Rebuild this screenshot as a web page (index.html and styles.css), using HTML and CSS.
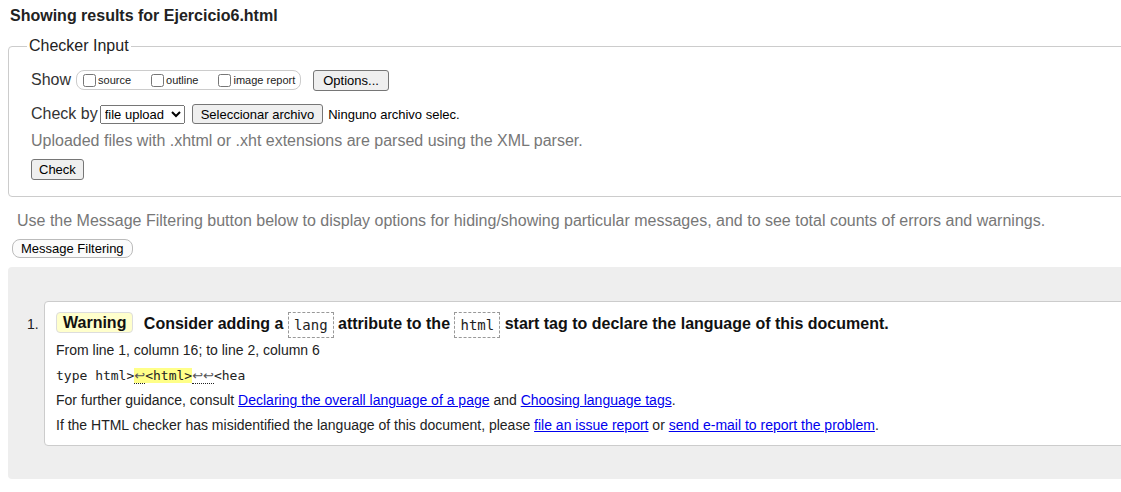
FILE: index.html
```html
<!DOCTYPE html>
<html lang="es">
<head>
<meta charset="utf-8">
<title>Showing results for Ejercicio6.html - Nu Html Checker</title>
<link rel="stylesheet" href="styles.css">
</head>
<body>
<h2 class="title">Showing results for Ejercicio6.html</h2>
<form class="checker">
  <fieldset class="input-box">
    <legend class="legend">Checker Input</legend>
    <div class="row show-row">
      <span class="label">Show</span>
      <span class="opts">
        <label class="opt"><input type="checkbox"><span>source</span></label>
        <label class="opt"><input type="checkbox"><span>outline</span></label>
        <label class="opt"><input type="checkbox"><span>image report</span></label>
      </span>
      <button type="button" class="btn btn-options">Options...</button>
    </div>
    <div class="row checkby-row">
      <span class="label label-check">Check by</span>
      <select class="select"><option>file upload</option></select>
      <button type="button" class="btn btn-file">Seleccionar archivo</button>
      <span class="file-name">Ninguno archivo selec.</span>
    </div>
    <p class="hint">Uploaded files with .xhtml or .xht extensions are parsed using the XML parser.</p>
    <div class="row check-row"><button type="button" class="btn btn-check">Check</button></div>
  </fieldset>
</form>
<p class="filter-hint">Use the Message Filtering button below to display options for hiding/showing particular messages, and to see total counts of errors and warnings.</p>
<button type="button" class="btn-filter">Message Filtering</button>
<div class="results">
  <ol class="messages">
    <li class="message">
      <span class="num">1.</span>
      <div class="card">
        <p class="msg-title"><strong class="badge">Warning</strong> Consider adding a <code class="code">lang</code> attribute to the <code class="code">html</code> start tag to declare the language of this document.</p>
        <p class="loc">From line 1, column 16; to line 2, column 6</p>
        <p class="extract"><code class="ex">type html&gt;<b class="hl"><span class="lf">↩</span>&lt;html&gt;</b><span class="lf">↩↩</span>&lt;hea</code></p>
        <p class="info">For further guidance, consult <a href="#">Declaring the overall language of a page</a> and <a href="#">Choosing language tags</a>.</p>
        <p class="info">If the HTML checker has misidentified the language of this document, please <a href="#">file an issue report</a> or <a href="#">send e-mail to report the problem</a>.</p>
      </div>
    </li>
  </ol>
</div>
</body>
</html>
```
FILE: styles.css
```css
html, body {
  margin: 0;
  padding: 0;
  overflow: hidden;
}
body {
  font-family: "Liberation Sans", Arial, sans-serif;
  color: #222;
  background: #fff;
  width: 1121px;
  height: 492px;
}
.title {
  font-size: 16px;
  font-weight: bold;
  line-height: 18px;
  margin: 7px 0 0 10px;
  color: #222;
}
.checker {
  margin: 0;
}
.input-box {
  margin: 12px 0 0 8px;
  width: 1180px;
  border: 1px solid #ccc;
  border-radius: 4px;
  padding: 0 0 16px 22px;
  min-width: 0;
}
.legend {
  font-size: 16px;
  line-height: 18px;
  padding: 0 2px;
  margin-left: -4px;
  color: #222;
}
.row {
  display: flex;
  align-items: center;
}
.show-row {
  margin-top: 15px;
  height: 20px;
}
.label {
  font-size: 16px;
  color: #333;
  margin-right: 5px;
}
.opts {
  display: inline-flex;
  align-items: center;
  box-sizing: border-box;
  height: 20px;
  border: 1px solid #ccc;
  border-radius: 8px;
  padding: 0 5px 0 6px;
}
.opt {
  display: inline-flex;
  align-items: center;
  font-size: 11px;
  color: #222;
  margin-right: 20px;
}
.opt:last-child {
  margin-right: 0;
}
.opt input {
  margin: 0 2px 0 0;
  width: 13px;
  height: 13px;
}
.btn {
  font-family: "Liberation Sans", Arial, sans-serif;
  font-size: 13px;
  color: #000;
  background: #efefef;
  border: 1px solid #767676;
  border-radius: 3px;
  padding: 0 8px;
  height: 21px;
  line-height: 19px;
}
.btn-options {
  margin-left: 12px;
  padding: 0 9px;
}
.checkby-row {
  margin-top: 14px;
  height: 20px;
}
.label-check {
  margin-right: 2px;
}
.select {
  font-family: "Liberation Sans", Arial, sans-serif;
  font-size: 13px;
  width: 85px;
  height: 19px;
  margin: 0 7px 0 0;
  color: #000;
}
.btn-file {
  height: 20px;
  padding: 0 8px;
}
.file-name {
  font-size: 13px;
  color: #000;
  margin-left: 5px;
}
.hint {
  margin: 8px 0 0;
  font-size: 16px;
  line-height: 18px;
  color: #777;
}
.check-row {
  margin-top: 9px;
}
.btn-check {
  padding: 0 7px;
}
.filter-hint {
  margin: 15px 0 0 17px;
  font-size: 16px;
  line-height: 18px;
  color: #777;
  white-space: nowrap;
}
.btn-filter {
  display: block;
  margin: 9px 0 0 12px;
  font-family: "Liberation Sans", Arial, sans-serif;
  font-size: 13px;
  color: #000;
  background: #fbfbfb;
  border: 1px solid #bbb;
  border-radius: 8px;
  height: 19px;
  line-height: 17px;
  padding: 0 8px;
}
.results {
  margin: 9px 0 0 8px;
  width: 1180px;
  background: #eee;
  border-radius: 4px;
  padding: 34px 0 33px 19px;
  box-sizing: border-box;
}
.messages {
  margin: 0;
  padding: 0;
  list-style: none;
}
.message {
  display: flex;
  align-items: flex-start;
}
.num {
  width: 17px;
  flex: none;
  font-size: 14px;
  line-height: 26px;
  padding-top: 10px;
  color: #222;
}
.card {
  flex: 1;
  background: #fff;
  border: 1px solid #ccc;
  border-radius: 4px;
  padding: 9px 0 7px 11px;
}
.msg-title {
  margin: 0;
  font-size: 16px;
  font-weight: bold;
  line-height: 26px;
  height: 26px;
  white-space: nowrap;
  color: #111;
}
.badge {
  display: inline-block;
  background: #ffc;
  border: 1px solid #ddd;
  border-radius: 4px;
  padding: 0 6px;
  line-height: 19px;
  margin-right: 6px;
  vertical-align: 1px;
}
.code {
  display: inline-block;
  font-family: "DejaVu Sans Mono", monospace;
  font-size: 14px;
  font-weight: normal;
  line-height: 24px;
  border: 1px dashed #999;
  padding: 0 5px;
  vertical-align: middle;
  color: #222;
}
.loc, .info, .extract {
  margin: 0;
  font-size: 14px;
  line-height: 25px;
  color: #222;
  white-space: nowrap;
}
.loc {
  margin-top: 1px;
}
.ex {
  font-family: "DejaVu Sans Mono", monospace;
  font-size: 13px;
}
.hl {
  font-weight: normal;
  background: #ff8;
}
.lf {
  font-family: "DejaVu Sans", sans-serif;
  color: #555;
  border-bottom: 1px dotted #222;
}
a {
  color: #00e;
  text-decoration: underline;
}
```
